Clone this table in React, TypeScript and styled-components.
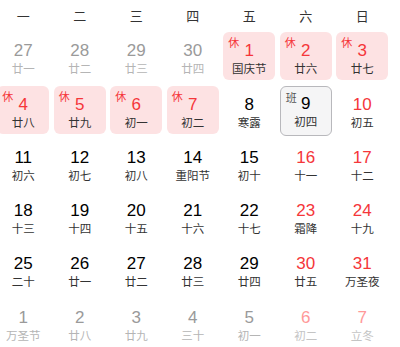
import React from 'react';
import styled, { createGlobalStyle } from 'styled-components';

const GlobalStyle = createGlobalStyle`
  html, body {
    margin: 0;
    padding: 0;
    background: #fff;
    overflow: hidden;
  }
  body {
    font-family: Arial, "Liberation Sans", "Noto Sans CJK SC", sans-serif;
  }
`;

type Tone = 'normal' | 'weekend' | 'faded' | 'fadedWeekend';
type Mark = 'rest' | 'work' | undefined;

interface Day {
  num: number;
  lunar: string;
  tone: Tone;
  mark?: Mark;
}

const weekNames = ['一', '二', '三', '四', '五', '六', '日'];

const numColors: Record<Tone, string> = {
  normal: '#000',
  weekend: '#f5363a',
  faded: '#9a9a9a',
  fadedWeekend: '#f99',
};

const lunarColors: Record<Tone, string> = {
  normal: '#333',
  weekend: '#333',
  faded: '#b5b5b5',
  fadedWeekend: '#c4c4c4',
};

const Board = styled.div`
  width: 395.5px;
  margin-left: -5px;
  display: grid;
  grid-template-columns: repeat(7, 1fr);
  grid-template-rows: 27px repeat(6, 48px);
  row-gap: 5.3px;
  user-select: none;
`;

const WeekHead = styled.div`
  display: flex;
  align-items: center;
  justify-content: center;
  font-size: 13px;
  color: #333;
  padding-top: 3px;
  font-family: "Noto Sans CJK SC", sans-serif;
`;

const Cell = styled.div<{ $mark?: Mark }>`
  position: relative;
  margin: 0 2.25px;
  border-radius: 6px;
  box-sizing: border-box;
  display: flex;
  flex-direction: column;
  align-items: center;
  padding-top: ${p => (p.$mark === 'work' ? '8.5px' : '10px')};
  background: ${p =>
    p.$mark === 'rest' ? '#fde2e3' : p.$mark === 'work' ? '#f5f5f6' : 'transparent'};
  border: ${p => (p.$mark === 'work' ? '1.5px solid #b8b8bc' : 'none')};
  height: ${p => (p.$mark === 'work' ? '50px' : '48px')};
`;

const Num = styled.span<{ $tone: Tone }>`
  font-family: Arial, "Liberation Sans", sans-serif;
  font-size: 17px;
  line-height: 18px;
  color: ${p => numColors[p.$tone]};
`;

const Lunar = styled.span<{ $tone: Tone }>`
  font-family: "Noto Sans CJK SC", sans-serif;
  font-size: 11.5px;
  line-height: 16px;
  color: ${p => lunarColors[p.$tone]};
`;

const Tag = styled.span<{ $mark?: Mark }>`
  position: absolute;
  top: 4px;
  left: 5px;
  font-family: "Noto Sans CJK SC", sans-serif;
  font-size: 11px;
  line-height: 12px;
  color: ${p => (p.$mark === 'rest' ? '#f5363a' : '#555')};
`;

const d = (num: number, lunar: string, tone: Tone = 'normal', mark?: Mark): Day => ({
  num,
  lunar,
  tone,
  mark,
});

const days: Day[] = [
  d(27, '廿一', 'faded'),
  d(28, '廿二', 'faded'),
  d(29, '廿三', 'faded'),
  d(30, '廿四', 'faded'),
  d(1, '国庆节', 'weekend', 'rest'),
  d(2, '廿六', 'weekend', 'rest'),
  d(3, '廿七', 'weekend', 'rest'),

  d(4, '廿八', 'weekend', 'rest'),
  d(5, '廿九', 'weekend', 'rest'),
  d(6, '初一', 'weekend', 'rest'),
  d(7, '初二', 'weekend', 'rest'),
  d(8, '寒露'),
  d(9, '初四', 'normal', 'work'),
  d(10, '初五', 'weekend'),

  d(11, '初六'),
  d(12, '初七'),
  d(13, '初八'),
  d(14, '重阳节'),
  d(15, '初十'),
  d(16, '十一', 'weekend'),
  d(17, '十二', 'weekend'),

  d(18, '十三'),
  d(19, '十四'),
  d(20, '十五'),
  d(21, '十六'),
  d(22, '十七'),
  d(23, '霜降', 'weekend'),
  d(24, '十九', 'weekend'),

  d(25, '二十'),
  d(26, '廿一'),
  d(27, '廿二'),
  d(28, '廿三'),
  d(29, '廿四'),
  d(30, '廿五', 'weekend'),
  d(31, '万圣夜', 'weekend'),

  d(1, '万圣节', 'faded'),
  d(2, '廿八', 'faded'),
  d(3, '廿九', 'faded'),
  d(4, '三十', 'faded'),
  d(5, '初一', 'faded'),
  d(6, '初二', 'fadedWeekend'),
  d(7, '立冬', 'fadedWeekend'),
];

export default function App() {
  return (
    <>
      <GlobalStyle />
      <Board>
        {weekNames.map(w => (
          <WeekHead key={w}>{w}</WeekHead>
        ))}
        {days.map((day, i) => (
          <Cell key={i} $mark={day.mark}>
            {day.mark && <Tag $mark={day.mark}>{day.mark === 'rest' ? '休' : '班'}</Tag>}
            <Num $tone={day.tone}>{day.num}</Num>
            <Lunar $tone={day.tone}>{day.lunar}</Lunar>
          </Cell>
        ))}
      </Board>
    </>
  );
}
